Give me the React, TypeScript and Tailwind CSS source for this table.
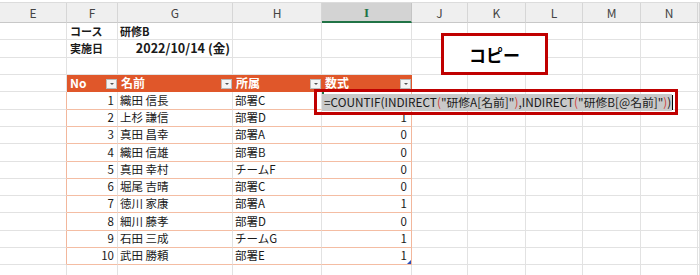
import React from "react";

const W = [
  "w-[67px]",
  "w-[51px]",
  "w-[115px]",
  "w-[89px]",
  "w-[90px]",
  "w-[56px]",
  "w-[58px]",
  "w-[57px]",
  "w-[58px]",
  "w-[57px]",
  "w-[2px]",
];

const LETTERS = ["E", "F", "G", "H", "I", "J", "K", "L", "M", "N", ""];

// heights for rows 1..15
const H = [
  "h-[17px]",
  "h-[18px]",
  "h-[17px]",
  "h-[17px]",
  "h-[18px]",
  "h-[17px]",
  "h-[17px]",
  "h-[18px]",
  "h-[17px]",
  "h-[17px]",
  "h-[17px]",
  "h-[18px]",
  "h-[17px]",
  "h-[17px]",
  "h-[17px]",
];

const people: [number, string, string, number | null][] = [
  [1, "織田 信長", "部署C", null],
  [2, "上杉 謙信", "部署D", 1],
  [3, "真田 昌幸", "部署A", 0],
  [4, "織田 信雄", "部署B", 0],
  [5, "真田 幸村", "チームF", 0],
  [6, "堀尾 吉晴", "部署C", 0],
  [7, "徳川 家康", "部署A", 1],
  [8, "細川 藤孝", "部署D", 0],
  [9, "石田 三成", "チームG", 1],
  [10, "武田 勝頼", "部署E", 1],
];

const GRID = "border-b border-r border-[#e2e2e2]";

function Filter() {
  return (
    <span className="absolute right-[1px] bottom-[2px] w-[11px] h-[10px] bg-[#f4f4f4] border border-[#b9b9b9] flex items-center justify-center">
      <span className="w-0 h-0 border-l-[2px] border-r-[2px] border-t-[2px] border-l-transparent border-r-transparent border-t-[#555]" />
    </span>
  );
}

function PlainRow({ h, children }: { h: string; children?: React.ReactNode[] }) {
  return (
    <div className={`flex ${h}`}>
      {W.map((w, i) => (
        <div key={i} className={`${w} ${GRID} shrink-0 flex items-center whitespace-nowrap`}>
          {children ? children[i] : null}
        </div>
      ))}
    </div>
  );
}

export default function App() {
  return (
    <div className="relative w-[700px] h-[275px] overflow-hidden bg-white font-['Noto_Sans_CJK_JP',sans-serif] text-[11px] leading-none text-[#1a1a1a]">
      {/* Column headers */}
      <div className="h-[2px] bg-white" />
      <div className="flex h-[21px] bg-[#efefef] border-t border-[#dcdcdc]">
        {W.map((w, i) => (
          <div
            key={i}
            className={
              i === 4
                ? `${w} shrink-0 flex items-center justify-center bg-[#d3d3d3] border-r border-[#c4c4c4] border-b-2 border-b-[#217346] text-[#217346] font-['Liberation_Serif',serif] font-bold text-[13px]`
                : `${w} shrink-0 flex items-center justify-center border-r border-[#d6d6d6] border-b border-b-[#c8c8c8] text-[#444] text-[12px]`
            }
          >
            {LETTERS[i]}
          </div>
        ))}
      </div>

      <PlainRow
        h={H[0]}
        children={[
          null,
          <span className="pl-[3px] font-bold">コース</span>,
          <span className="pl-[2px] font-bold">研修B</span>,
        ]}
      />
      <PlainRow
        h={H[1]}
        children={[
          null,
          <span className="pl-[3px] font-bold">実施日</span>,
          <span className="w-full text-right pr-[2px] font-bold text-[12.6px]">2022/10/14 (金)</span>,
        ]}
      />
      <PlainRow h={H[2]} />

      {/* Table header */}
      <div className={`flex ${H[3]}`}>
        <div className={`${W[0]} shrink-0 border-b border-r border-[#e2e2e2]`} />
        {[
          { w: W[1], t: "No" },
          { w: W[2], t: "名前" },
          { w: W[3], t: "所属" },
          { w: W[4], t: "数式" },
        ].map((c) => (
          <div
            key={c.t}
            className={`${c.w} shrink-0 relative bg-[#e0572a] border-b border-[#e0572a] flex items-center pl-[3px] font-bold text-white text-[12px]`}
          >
            {c.t}
            <Filter />
          </div>
        ))}
        {W.slice(5).map((w, i) => (
          <div key={i} className={`${w} shrink-0 ${GRID}`} />
        ))}
      </div>

      {/* Table body */}
      {people.map(([no, name, dept, val], r) => (
        <div key={no} className={`flex ${H[4 + r]}`}>
          <div className={`${W[0]} shrink-0 border-b border-[#e2e2e2] border-r border-r-[#f2b79c]`} />
          <div className={`${W[1]} shrink-0 border-b border-b-[#f4bda3] border-r border-r-[#e2e2e2] flex items-center justify-end pr-[3px] text-[11.5px]`}>
            {no}
          </div>
          <div className={`${W[2]} shrink-0 border-b border-b-[#f4bda3] border-r border-r-[#e2e2e2] flex items-center pl-[2px] text-[11.5px]`}>
            {name}
          </div>
          <div className={`${W[3]} shrink-0 border-b border-b-[#f4bda3] border-r border-r-[#e2e2e2] flex items-center pl-[2px] text-[11.5px]`}>
            {dept}
          </div>
          <div
            className={
              r === 0
                ? `${W[4]} shrink-0 border-l-2 border-l-[#217346] border-b-2 border-b-[#217346] border-r border-r-[#f2b79c]`
                : `${W[4]} shrink-0 relative border-b border-b-[#f4bda3] border-r border-r-[#f2b79c] flex items-center justify-end pr-[4px] text-[11.5px]`
            }
          >
            {val}
            {r === people.length - 1 && (
              <span className="absolute right-[0px] bottom-[0px] w-0 h-0 border-l-[4px] border-b-[4px] border-l-transparent border-b-[#2b4fb8]" />
            )}
          </div>
          {W.slice(5).map((w, i) => (
            <div key={i} className={`${w} shrink-0 ${GRID}`} />
          ))}
        </div>
      ))}
      <PlainRow h={H[14]} />

      {/* Copy label */}
      <div className="absolute left-[441px] top-[33px] w-[107px] h-[42px] border-[3px] border-[#c00000] bg-white flex items-center justify-center font-bold text-[17px] text-black">
        コピー
      </div>

      {/* Formula in edit mode */}
      <div className="absolute left-[314px] top-[89px] w-[364px] h-[26px] border-[3px] border-[#c00000] flex items-center pl-[5px]">
        <span className="h-[17px] flex items-center bg-[#c9c9c9] pl-[2px] pr-[1px] text-[11.8px] whitespace-nowrap">
          =COUNTIF(INDIRECT<span className="text-[#d0433d]">(</span>"研修A[名前]"
          <span className="text-[#d0433d]">)</span>,INDIRECT<span className="text-[#d0433d]">(</span>"研修B[@名前]"
          <span className="text-[#d0433d]">)</span>)
        </span>
        <span className="w-px h-[15px] bg-black" />
      </div>
    </div>
  );
}
